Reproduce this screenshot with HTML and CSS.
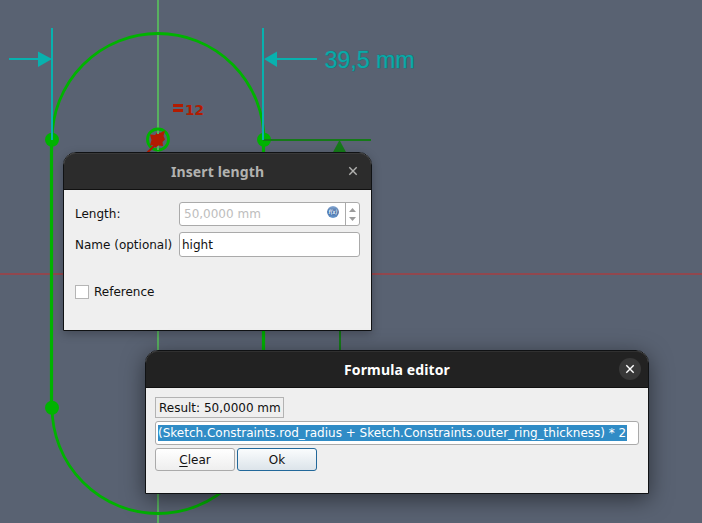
FILE: index.html
```html
<!DOCTYPE html>
<html lang="en">
<head>
<meta charset="utf-8">
<title>Sketcher</title>
<link rel="stylesheet" href="styles.css">
</head>
<body>
<main class="viewport">
  <svg class="sketch" width="702" height="523" viewBox="0 0 702 523">
    <path class="axis-x" d="M0 274H702"/>
    <path class="axis-y" d="M158 0V523"/>
    <g class="geometry">
      <path d="M52 140A106 106.5 0 0 1 264 140"/>
      <path d="M52 407A106 106.5 0 0 0 264 407"/>
      <path class="edge" d="M51.5 140V407M263.5 140V407"/>
      <circle class="center" cx="158" cy="139.5" r="10.5"/>
    </g>
    <g class="points">
      <circle cx="52" cy="139.7" r="7"/>
      <circle cx="264" cy="139.7" r="7"/>
      <circle cx="52" cy="407.7" r="7"/>
    </g>
    <g class="height-dim">
      <path d="M263 140H371M340 150V360"/>
      <path class="arrow" d="M339.500 140L347 154H332Z"/>
    </g>
    <g class="width-dim">
      <path d="M52 28V140M263 28V140M9 59H39M276 59H317"/>
      <path class="arrow" d="M38 51.500L52 59L38 67ZM277 51.500L264 59L277 67Z"/>
    </g>
    <g class="marker">
      <path d="M150 134.500L155 135L157 132.500L160 133L165 130.500L163.500 136L165 139.500L162.500 142L163 146L158.500 145.500L155.500 147.500L153.500 145L150 145.500L151.500 140Z"/>
      <path class="leader" d="M155 145L147 153"/>
      <path d="M173 104H183V107H173ZM173 109H183V112H173Z"/>
    </g>
    <path class="hint" d="M158 131V134M158 147V150"/>
    <text class="count" x="185" y="115" textLength="19" lengthAdjust="spacingAndGlyphs">12</text>
    <text class="measure" x="324.500" y="68" textLength="90" lengthAdjust="spacingAndGlyphs">39,5 mm</text>
  </svg>

  <section class="window length-window">
    <header class="titlebar">
      <h1 class="title">Insert length</h1>
      <span class="close"><svg width="10" height="10" viewBox="0 0 10 10"><path d="M1.300 1.300L8.700 8.700M8.700 1.300L1.300 8.700"/></svg></span>
    </header>
    <div class="body form">
      <label class="label-length">Length:</label>
      <div class="field spin">
        <span class="value">50,0000 mm</span>
        <svg class="fx" width="12" height="12" viewBox="0 0 12 12">
          <defs><linearGradient id="ball" x2="0" y2="1"><stop offset="0" stop-color="#88aad4"/><stop offset=".5" stop-color="#40689f"/><stop offset="1" stop-color="#6b9ad0"/></linearGradient></defs>
          <circle cx="6" cy="6" r="5.900" fill="url(#ball)"/>
          <text x="6" y="7.900" text-anchor="middle" textLength="9" lengthAdjust="spacingAndGlyphs">f(x)</text>
        </svg>
        <span class="steps"><svg width="7" height="13" viewBox="0 0 7 13"><path d="M3.500 0L7 4H0ZM0 9H7L3.500 13Z"/></svg></span>
      </div>
      <label class="label-name">Name (optional)</label>
      <div class="field"><span class="name">hight</span></div>
      <div class="reference"><span class="box"></span><span class="label-ref">Reference</span></div>
    </div>
  </section>

  <section class="window formula-window">
    <header class="titlebar">
      <h1 class="title">Formula editor</h1>
      <span class="close"><svg width="10" height="10" viewBox="0 0 10 10"><path d="M1.300 1.300L8.700 8.700M8.700 1.300L1.300 8.700"/></svg></span>
    </header>
    <div class="body">
      <div class="result">Result: 50,0000 mm</div>
      <div class="field expression"><span class="selected">(Sketch.Constraints.rod_radius + Sketch.Constraints.outer_ring_thickness) * 2</span></div>
      <div class="buttons">
        <span class="button"><span class="mnemonic">C</span>lear</span>
        <span class="button primary">Ok</span>
      </div>
    </div>
  </section>
</main>
</body>
</html>
```
FILE: styles.css
```css
* { box-sizing: border-box; }
body { margin: 0; font: 12px "DejaVu Sans", sans-serif; color: #111; }
.viewport { position: relative; width: 702px; height: 523px; overflow: hidden; background: #596272; }
.sketch { display: block; fill: none; stroke-width: 2; }
.axis-x { stroke: #91474e; }
.axis-y { stroke: #58b060; }
.geometry { stroke: #00b300; stroke-width: 2.8; }
.edge { stroke-width: 3.2; }
.points { fill: #00b300; }
.height-dim { stroke: #157a18; }
.height-dim .arrow { fill: #157a18; stroke: none; }
.width-dim { stroke: #08b1ae; }
.width-dim .arrow { fill: #08b1ae; stroke: none; }
.marker { fill: #b31b00; }
.leader { stroke: #b31b00; }
.hint { stroke: #58b060; }
.count { fill: #b31b00; font: bold 13.7px "DejaVu Sans", sans-serif; }
.measure { fill: #08aaa8; stroke: #286f78; stroke-width: 1; paint-order: stroke; font: 23.5px "Liberation Sans", sans-serif; }

.window { position: absolute; border: 1px solid #101214; border-radius: 13px 13px 0 0; background: #efefef; display: flex; flex-direction: column; }
.length-window { left: 63px; top: 152px; width: 309px; height: 179px; box-shadow: 0 3px 10px rgba(0,0,0,.25); }
.formula-window { left: 145px; top: 350px; width: 504px; height: 144px; box-shadow: 0 5px 22px rgba(0,0,0,.5); }
.titlebar { display: grid; grid-template-columns: 36px 1fr 36px; align-items: center; height: 37px; flex: none; background: #2c2c2c; border-bottom: 1px solid #111; border-radius: 12px 12px 0 0; box-shadow: inset 0 1px #393939; color: #b2b2b0; }
.formula-window .titlebar { background: #222; color: #fff; box-shadow: inset 0 1px #303030; }
.title { grid-column: 2; margin: 2px 0 0; text-align: center; font: bold 14px/20px "Noto Sans", sans-serif; letter-spacing: .13px; white-space: nowrap; }
.close { width: 22px; height: 22px; border-radius: 50%; display: flex; align-items: center; justify-content: center; justify-self: center; }
.close path { stroke: currentColor; stroke-width: 1.4; fill: none; }
.formula-window .close { background: #383838; }
.field { height: 24px; border: 1px solid #aaa; border-radius: 3px; background: #fff; display: flex; align-items: center; white-space: nowrap; }
.form { display: grid; grid-template-columns: 104px 181px; grid-template-rows: 24px 25px; row-gap: 6px; padding: 12px 11px; align-items: center; }
.form .field { height: 100%; }
.spin { color: #bdbdbd; }
.value { width: 147px; padding-left: 4px; }
.fx { margin-top: -5px; flex: none; }
.fx text { font: italic bold 6px "DejaVu Sans", sans-serif; fill: #e3eefb; }
.steps { margin-left: auto; width: 14px; height: 100%; border-left: 1px solid #aaa; display: flex; align-items: center; justify-content: center; }
.steps path { fill: #9b9b9b; }
.name { padding-left: 2px; }
.reference { grid-column: 1 / -1; display: flex; align-items: center; gap: 5px; margin-top: 21px; }
.label-ref { padding-top: 1px; }
.box { width: 14px; height: 14px; border: 1px solid #b5b5b5; background: #fff; }
.formula-window .body { padding: 9px; }
.result { width: 129px; height: 21px; border: 1px solid #b3b3b3; padding-left: 3px; line-height: 20px; white-space: nowrap; }
.expression { margin-top: 3px; padding-left: 2px; }
.selected { background: #308cc6; color: #fff; line-height: 15px; padding: 1px 1px 0 0; }
.buttons { display: flex; gap: 2px; margin-top: 3px; }
.button { width: 80px; height: 23px; border: 1px solid #aaa; border-radius: 3px; background: linear-gradient(#fff, #eee); text-align: center; line-height: 23px; }
.primary { border-color: #22689a; background: linear-gradient(#fafcfd, #dce4ea); }
.mnemonic { text-decoration: underline; text-underline-offset: 2px; }
```
